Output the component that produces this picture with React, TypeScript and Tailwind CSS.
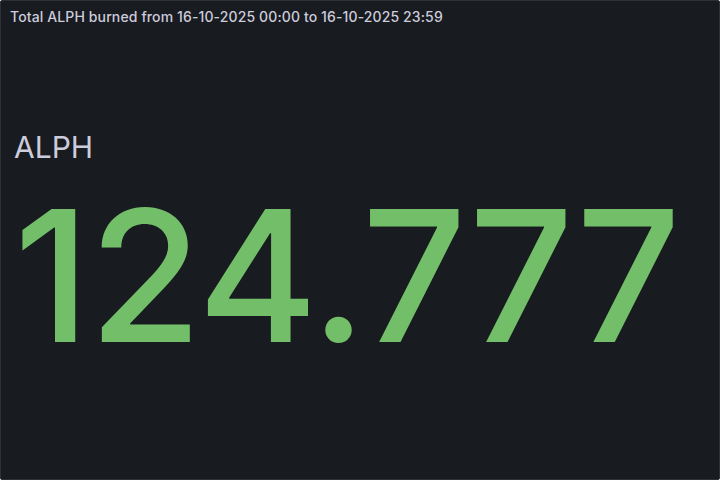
export default function App() {
  return (
    <div
      className="w-[720px] h-[480px] bg-[#181b1f] border border-[#2e3036] rounded-[2px] flex flex-col overflow-hidden"
      style={{ fontFamily: "Inter, 'Noto Sans', sans-serif" }}
    >
      {/* Panel header */}
      <div className="h-[32px] flex items-center px-[9px] shrink-0">
        <h2 className="text-[14px] font-medium text-[#ccccdc] leading-none tracking-[0.12px]">
          Total ALPH burned from 16-10-2025 00:00 to 16-10-2025 23:59
        </h2>
      </div>

      {/* Stat body */}
      <div className="flex flex-col pl-[13px]">
        <div className="mt-[99px] text-[30px] leading-none text-[#ccccdc]">ALPH</div>
        <div className="mt-[22px] text-[183px] leading-none font-medium text-[#73bf69] tracking-[-1px]">
          124.777
        </div>
      </div>
    </div>
  );
}
